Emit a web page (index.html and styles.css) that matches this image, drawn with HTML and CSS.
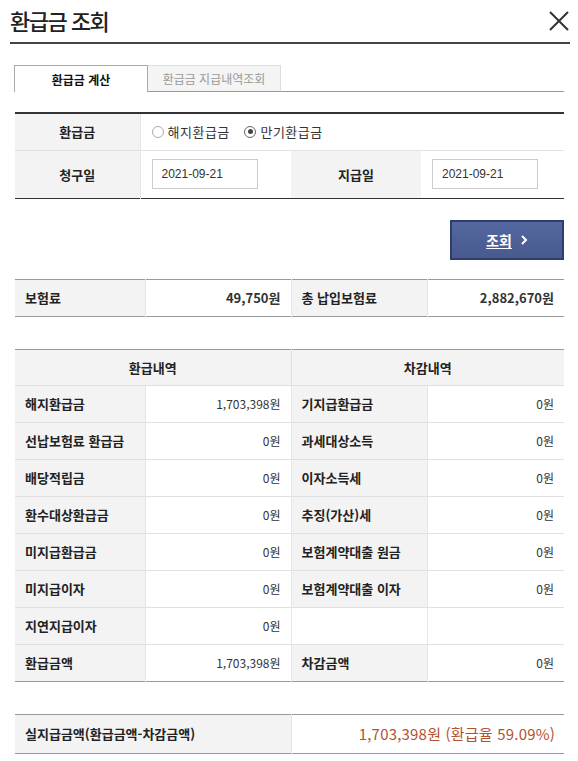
FILE: index.html
```html
<!DOCTYPE html>
<html lang="ko">
<head>
<meta charset="utf-8">
<link rel="stylesheet" href="styles.css">
</head>
<body>
<div class="popup">
  <header class="head">
    <h1 class="title">환급금 조회</h1>
    <button class="close" aria-label="닫기">
      <svg width="20" height="20" viewBox="0 0 20 20"><path d="M1 1 L19 19 M19 1 L1 19" stroke="#333" stroke-width="2" fill="none"/></svg>
    </button>
  </header>

  <div class="content">
    <div class="tabs">
      <div class="tab active">환급금 계산</div>
      <div class="tab">환급금 지급내역조회</div>
      <div class="tab-rest"></div>
    </div>

    <table class="form">
      <colgroup><col class="c1"><col class="c2"><col class="c3"><col class="c4"></colgroup>
      <tr class="r1">
        <th>환급금</th>
        <td colspan="3">
          <label class="radio"><span class="dot"></span>해지환급금</label>
          <label class="radio on"><span class="dot"></span>만기환급금</label>
        </td>
      </tr>
      <tr class="r2">
        <th>청구일</th>
        <td><div class="input">2021-09-21</div></td>
        <th>지급일</th>
        <td><div class="input">2021-09-21</div></td>
      </tr>
    </table>

    <div class="btn-row">
      <button class="btn"><span class="u">조회</span>
        <svg class="arr" width="8" height="10" viewBox="0 0 8 10"><path d="M2 1 L6 5 L2 9" stroke="#fff" stroke-width="2" fill="none"/></svg>
      </button>
    </div>

    <table class="data premium">
      <colgroup><col class="d1"><col class="d2"><col class="d3"><col class="d4"></colgroup>
      <tr>
        <th>보험료</th><td class="b">49,750원</td>
        <th>총 납입보험료</th><td class="b">2,882,670원</td>
      </tr>
    </table>

    <table class="data detail">
      <colgroup><col class="d1"><col class="d2"><col class="d3"><col class="d4"></colgroup>
      <tr class="hrow"><th colspan="2" class="center">환급내역</th><th colspan="2" class="center">차감내역</th></tr>
      <tr><th>해지환급금</th><td>1,703,398원</td><th>기지급환급금</th><td>0원</td></tr>
      <tr><th>선납보험료 환급금</th><td>0원</td><th>과세대상소득</th><td>0원</td></tr>
      <tr><th>배당적립금</th><td>0원</td><th>이자소득세</th><td>0원</td></tr>
      <tr><th>환수대상환급금</th><td>0원</td><th>추징(가산)세</th><td>0원</td></tr>
      <tr><th>미지급환급금</th><td>0원</td><th>보험계약대출 원금</th><td>0원</td></tr>
      <tr><th>미지급이자</th><td>0원</td><th>보험계약대출 이자</th><td>0원</td></tr>
      <tr><th>지연지급이자</th><td>0원</td><td class="blank"></td><td></td></tr>
      <tr><th>환급금액</th><td>1,703,398원</td><th>차감금액</th><td>0원</td></tr>
    </table>

    <table class="data total">
      <colgroup><col class="t1"><col class="t2"></colgroup>
      <tr><th>실지급금액(환급금액-차감금액)</th><td class="amount">1,703,398원 (환급율 59.09%)</td></tr>
    </table>
  </div>
</div>
</body>
</html>
```

FILE: styles.css
```css
* { box-sizing: border-box; }
html, body { margin: 0; padding: 0; background: #fff; }
body {
  font-family: "Noto Sans CJK KR", "Noto Sans", sans-serif;
  color: #333;
  font-size: 13px;
}
.popup { width: 578px; }

.head {
  margin: 0 8px 0 10px;
  height: 44px;
  border-bottom: 2px solid #444;
  display: flex;
  align-items: center;
  justify-content: space-between;
}
.title {
  margin: 0;
  font-size: 22px;
  font-weight: 500;
  color: #222;
  letter-spacing: -1.5px;
  line-height: 1;
  padding-bottom: 3px;
}
.close {
  border: 0;
  background: none;
  padding: 0;
  margin-right: 1px;
  width: 20px;
  height: 20px;
  display: block;
}
.close svg { display: block; }

.content { padding: 0 14px 0 15px; }

.tabs {
  margin-top: 21px;
  display: flex;
  height: 27px;
}
.tab {
  width: 133px;
  display: flex;
  align-items: center;
  justify-content: center;
  font-size: 12px;
  color: #999;
  background: #f4f4f4;
  border-top: 1px solid #ddd;
  border-right: 1px solid #ddd;
  border-bottom: 1px solid #999;
}
.tab.active {
  margin-left: -1px;
  width: 134px;
  background: #fff;
  color: #111;
  font-weight: 700;
  border: 1px solid #aaa;
  border-bottom: 0;
}
.tab-rest { flex: 1; border-bottom: 1px solid #999; }

table {
  width: 100%;
  border-collapse: collapse;
  table-layout: fixed;
}
th { font-weight: 700; color: #222; }

.form {
  margin-top: 20px;
  border-top: 2px solid #333;
  border-bottom: 1px solid #333;
}
.form .c1 { width: 125px; }
.form .c2 { width: 151px; }
.form .c3 { width: 130px; }
.form .c4 { width: auto; }
.form th {
  background: #f3f3f3;
  text-align: center;
  font-size: 13px;
}
.form td { padding: 0 0 0 11px; }
.form .r1 th, .form .r1 td { height: 37px; border-bottom: 1px solid #e2e2e2; }
.form .r2 th, .form .r2 td { height: 48px; }
.form .r1 th { border-right: 1px solid #e6e6e6; }
.form .r2 td:nth-child(2) { border-left: 1px solid #e6e6e6; }

.radio {
  display: inline-flex;
  align-items: center;
  font-size: 13px;
  color: #333;
  margin-right: 11px;
  letter-spacing: 0.5px;
}
.radio .dot {
  width: 12px;
  height: 12px;
  border: 1px solid #aaa;
  border-radius: 50%;
  margin-right: 4px;
  position: relative;
  background: #fff;
}
.radio.on .dot { border-color: #666; }
.radio.on .dot::after {
  content: "";
  position: absolute;
  left: 2.5px; top: 2.5px;
  width: 5px; height: 5px;
  border-radius: 50%;
  background: #444;
}
.input {
  width: 106px;
  height: 30px;
  border: 1px solid #ccc;
  font-size: 12px;
  color: #333;
  display: flex;
  align-items: center;
  padding-left: 9px;
  font-family: "Liberation Sans", sans-serif;
}

.btn-row {
  display: flex;
  justify-content: flex-end;
  margin-top: 21px;
}
.btn {
  width: 114px;
  height: 40px;
  background: linear-gradient(#5467a0, #485a8e);
  border: 2px solid #2f3d6d;
  color: #fff;
  font-family: "Noto Sans CJK KR", sans-serif;
  font-weight: 700;
  font-size: 14px;
  padding: 0;
  display: flex;
  align-items: center;
  justify-content: center;
  gap: 8px;
}
.btn .u { text-decoration: underline; text-underline-offset: 2px; }
.btn .arr { display: block; }

.data {
  border-top: 1px solid #999;
  border-bottom: 1px solid #999;
}
.data .d1 { width: 130px; }
.data .d2 { width: 146px; }
.data .d3 { width: 136px; }
.data .d4 { width: auto; }
.data th {
  background: #f3f3f3;
  text-align: left;
  padding: 0 10px;
  font-size: 13px;
  height: 37px;
  white-space: nowrap;
}
.data td {
  text-align: right;
  padding: 0 10px;
  font-size: 12px;
  height: 37px;
  white-space: nowrap;
}
.data td.b { font-weight: 700; font-size: 13px; }
.data th.center { text-align: center; }
.data td.blank { background: #fff; }
.data tr + tr th, .data tr + tr td { border-top: 1px solid #e0e0e0; }
.data th + td, .data td + th, .data td + td { border-left: 1px solid #e6e6e6; }
.premium { margin-top: 19px; }
.detail { margin-top: 32px; }
.detail .hrow th { height: 36px; }
.detail .hrow th + th { border-left: 1px solid #e0e0e0; }

.total { margin-top: 32px; }
.total .t1 { width: 276px; }
.total th { height: 39px; }
.total td.amount {
  color: #b4532e;
  font-size: 15px;
  padding-right: 9px;
  letter-spacing: 0.2px;
}
```
